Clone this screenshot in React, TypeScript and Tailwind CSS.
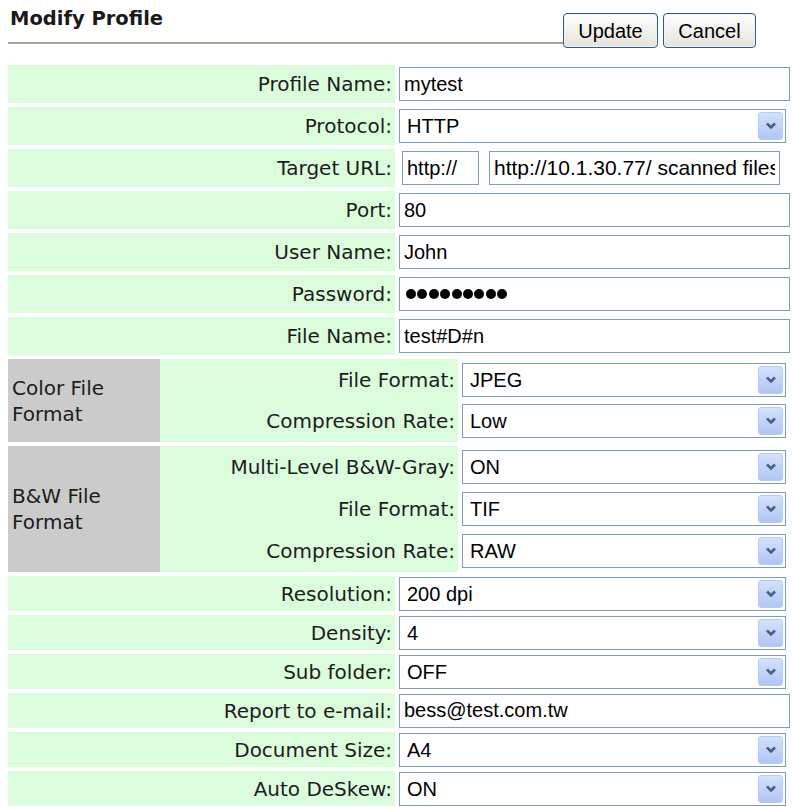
import React from 'react';

// Label text is Verdana-like, field text is Arial-like
const LABEL = "font-['DejaVu_Sans',Verdana,sans-serif] text-[20px] text-[#1c1c1c]";
const FIELD = "font-['Liberation_Sans',Arial,sans-serif] text-[20px] text-black";

const Arrow: React.FC = () => (
  <span className="absolute right-[2px] top-[2px] bottom-[2px] w-[25px] rounded-[3px] border border-[#b6cbf4] bg-gradient-to-b from-[#d3e1fd] to-[#b0c6f5] flex items-center justify-center">
    <svg width="12" height="8" viewBox="0 0 12 8">
      <path d="M2 1.5 L6 5.5 L10 1.5" fill="none" stroke="#4b5f86" strokeWidth="2.6" strokeLinejoin="miter" />
    </svg>
  </span>
);

const Select: React.FC<{ value: string }> = ({ value }) => (
  <div className={`relative h-[34px] w-full mr-[4px] border border-[#7f9db9] bg-white pl-[7px] flex items-center ${FIELD}`}>
    {value}
    <Arrow />
  </div>
);

const TextBox: React.FC<{ value: string; className?: string }> = ({ value, className = 'w-full' }) => (
  <input
    readOnly
    value={value}
    className={`h-[34px] border border-[#7f9db9] bg-white px-[4px] outline-none ${FIELD} ${className}`}
  />
);

const Password: React.FC = () => (
  <div className="h-[34px] w-full border border-[#7f9db9] bg-white pl-[6px] flex items-center gap-[1.4px]">
    {Array.from({ length: 9 }).map((_, i) => (
      <span key={i} className="w-[10px] h-[10px] rounded-full bg-black"></span>
    ))}
  </div>
);

type Row = { label: string; control: React.ReactNode };

const topRows: Row[] = [
  { label: 'Profile Name:', control: <TextBox value="mytest" /> },
  { label: 'Protocol:', control: <Select value="HTTP" /> },
  {
    label: 'Target URL:',
    control: (
      <div className="flex items-center gap-[10px] w-full">
        <TextBox value="http://" className="w-[77px] ml-[3px]" />
        <TextBox value="http://10.1.30.77/ scanned files" className="w-[291px] text-[21px]" />
      </div>
    ),
  },
  { label: 'Port:', control: <TextBox value="80" /> },
  { label: 'User Name:', control: <TextBox value="John" /> },
  { label: 'Password:', control: <Password /> },
  { label: 'File Name:', control: <TextBox value="test#D#n" /> },
];

const colorRows: Row[] = [
  { label: 'File Format:', control: <Select value="JPEG" /> },
  { label: 'Compression Rate:', control: <Select value="Low" /> },
];

const bwRows: Row[] = [
  { label: 'Multi-Level B&W-Gray:', control: <Select value="ON" /> },
  { label: 'File Format:', control: <Select value="TIF" /> },
  { label: 'Compression Rate:', control: <Select value="RAW" /> },
];

const bottomRows: Row[] = [
  { label: 'Resolution:', control: <Select value="200 dpi" /> },
  { label: 'Density:', control: <Select value="4" /> },
  { label: 'Sub folder:', control: <Select value="OFF" /> },
  { label: 'Report to e-mail:', control: <TextBox value="bess@test.com.tw" /> },
  { label: 'Document Size:', control: <Select value="A4" /> },
  { label: 'Auto DeSkew:', control: <Select value="ON" /> },
];

const FormRow: React.FC<{ row: Row; height: string }> = ({ row, height }) => (
  <div className={`flex ${height}`}>
    <div className={`w-[387px] shrink-0 bg-[#dcfddc] flex items-center justify-end pr-[3px] whitespace-nowrap ${LABEL}`}>{row.label}</div>
    <div className="flex-1 flex items-center pl-[4px]">{row.control}</div>
  </div>
);

const Section: React.FC<{ title: string; rows: Row[]; height: string }> = ({ title, rows, height }) => (
  <div className={`flex ${height}`}>
    <div className={`w-[152px] shrink-0 bg-[#cbcbcb] flex items-center pl-[4px] pr-[8px] leading-[26px] ${LABEL}`}>
      {title}
    </div>
    <div className="flex-1 flex flex-col">
      {rows.map((r, i) => (
        <div key={i} className="flex flex-1">
          <div className={`w-[298px] shrink-0 bg-[#dcfddc] flex items-center justify-end pr-[3px] whitespace-nowrap ${LABEL}`}>{r.label}</div>
          <div className="flex-1 flex items-center pl-[4px]">{r.control}</div>
        </div>
      ))}
    </div>
  </div>
);

const App: React.FC = () => {
  return (
    <div className="w-[792px] min-h-[807px] bg-white pl-[8px] pr-[2px]">
      {/* Header: title with rule + buttons */}
      <div className="flex items-start">
        <div className="w-[555px] h-[44px] border-b-2 border-[#aca593] pt-[7px] pl-[2px]">
          <h1 className="font-['DejaVu_Sans',Verdana,sans-serif] font-bold text-[19.5px] leading-[24px] text-[#1a1a1a]">
            Modify Profile
          </h1>
        </div>
        <div className="flex gap-[5px] mt-[13px]">
          <button className={`h-[35px] w-[95px] rounded-[4px] border border-[#2c5a86] bg-gradient-to-b from-white to-[#e4e2da] shadow-[inset_0_0_0_1px_#f4f4f0] ${FIELD}`}>
            Update
          </button>
          <button className={`h-[35px] w-[93px] rounded-[4px] border border-[#2c5a86] bg-gradient-to-b from-white to-[#e4e2da] shadow-[inset_0_0_0_1px_#f4f4f0] ${FIELD}`}>
            Cancel
          </button>
        </div>
      </div>

      {/* Form table */}
      <div className="mt-[17px] flex flex-col gap-[4px]">
        {topRows.map((r, i) => (
          <FormRow key={i} row={r} height="h-[38px]" />
        ))}
        <Section title="Color File Format" rows={colorRows} height="h-[83px]" />
        <Section title="B&W File Format" rows={bwRows} height="h-[126px]" />
        {bottomRows.map((r, i) => (
          <FormRow key={i} row={r} height="h-[35px]" />
        ))}
      </div>
    </div>
  );
};

export default App;
